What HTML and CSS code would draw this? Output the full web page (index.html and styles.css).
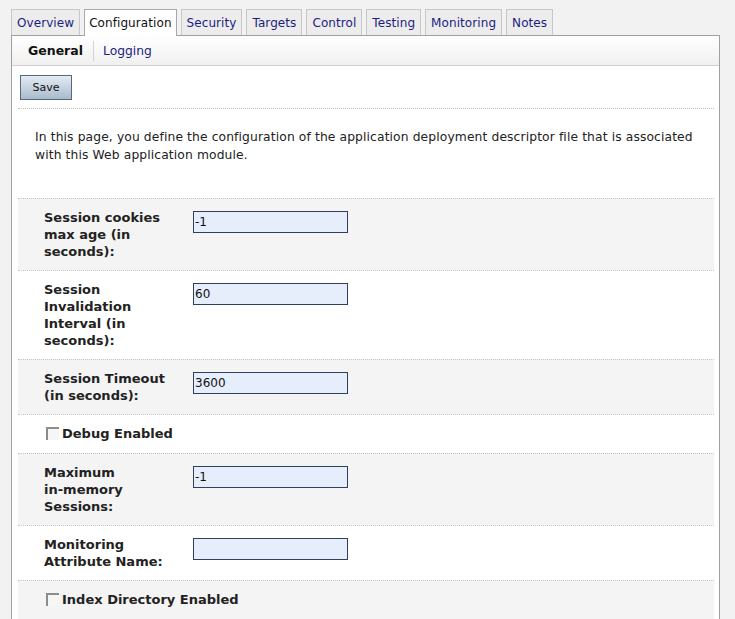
FILE: index.html
```html
<!DOCTYPE html>
<html>
<head>
<meta charset="utf-8">
<link rel="stylesheet" href="styles.css">
</head>
<body>
<div class="tabs">
  <span class="tab">Overview</span>
  <span class="tab active">Configuration</span>
  <span class="tab">Security</span>
  <span class="tab">Targets</span>
  <span class="tab">Control</span>
  <span class="tab">Testing</span>
  <span class="tab">Monitoring</span>
  <span class="tab">Notes</span>
</div>
<div class="panel">
  <div class="subtabs">
    <span class="sub current">General</span>
    <span class="sep"></span>
    <span class="sub link">Logging</span>
  </div>
  <div class="content">
    <div class="actions"><button class="btn">Save</button></div>
    <div class="desc">In this page, you define the configuration of the application deployment descriptor file that is associated with this Web application module.</div>
    <div class="row alt">
      <label class="lbl">Session cookies max age (in seconds):</label>
      <input class="field" type="text" value="-1">
    </div>
    <div class="row">
      <label class="lbl">Session Invalidation Interval (in seconds):</label>
      <input class="field" type="text" value="60">
    </div>
    <div class="row alt">
      <label class="lbl">Session Timeout (in seconds):</label>
      <input class="field" type="text" value="3600">
    </div>
    <div class="row ckrow">
      <span class="check"></span><span class="cklbl">Debug Enabled</span>
    </div>
    <div class="row alt">
      <label class="lbl">Maximum <span class="nowrap">in-memory</span> Sessions:</label>
      <input class="field" type="text" value="-1">
    </div>
    <div class="row">
      <label class="lbl">Monitoring Attribute Name:</label>
      <input class="field" type="text" value="">
    </div>
    <div class="row alt ckrow">
      <span class="check"></span><span class="cklbl">Index Directory Enabled</span>
    </div>
  </div>
</div>
</body>
</html>
```
FILE: styles.css
```css
html, body {
  margin: 0;
  padding: 0;
  background: #f2f2f2;
  font-family: "DejaVu Sans", sans-serif;
}
.tabs {
  display: flex;
  gap: 4px;
  padding: 9px 0 0 11px;
  height: 26px;
}
.tab {
  display: flex;
  align-items: center;
  height: 25px;
  padding: 0 5px;
  border: 1px solid #c8c8c8;
  border-bottom: none;
  background: #ececec;
  color: #1c1c80;
  font-size: 12px;
  letter-spacing: 0.08px;
}
.tab.active {
  background: #fff;
  color: #111;
  border-color: #a8a8a8;
  height: 26px;
  padding: 0 4px;
  position: relative;
  z-index: 1;
}
.panel {
  margin: 0 15px 0 11px;
  border: 1px solid #a0a0a0;
  background: #fff;
  min-height: 600px;
}
.subtabs {
  display: flex;
  align-items: center;
  height: 29px;
  padding-left: 16px;
  background: linear-gradient(#ffffff, #f0f0f0);
  border-bottom: 1px solid #cfcfcf;
  font-size: 12.5px;
}
.sub.current {
  font-weight: bold;
  color: #111;
}
.sep {
  width: 1px;
  height: 20px;
  background: #d4d4d4;
  margin: 0 9px 0 10px;
}
.sub.link {
  color: #1c1c80;
  font-size: 12.3px;
}
.content {
  padding: 0 5px 0 6px;
}
.actions {
  padding: 9px 0 8px 2px;
}
.btn {
  display: block;
  width: 52px;
  height: 25px;
  padding: 0;
  border: 1px solid #56687c;
  background: linear-gradient(#e4ebf3, #a9bbcd);
  color: #111;
  font-family: "DejaVu Sans", sans-serif;
  font-size: 11px;
}
.desc {
  border-top: 1px dotted #bdbdbd;
  padding: 19px 10px 34px 17px;
  font-size: 12.3px;
  letter-spacing: 0.12px;
  line-height: 18px;
  color: #222;
}
.row {
  display: flex;
  align-items: flex-start;
  padding: 10px 0 10px 26px;
  border-top: 1px dotted #c4c4c4;
  font-size: 13px;
  font-weight: bold;
  line-height: 17px;
  color: #222;
}
.row.ckrow {
  padding-bottom: 11px;
}
.row.alt {
  background: #f4f4f4;
}
.lbl {
  width: 130px;
  margin-right: 19px;
}
.nowrap {
  white-space: nowrap;
}
.field {
  box-sizing: border-box;
  width: 155px;
  height: 22px;
  margin: 2px 0 0 0;
  padding: 0 1px;
  border: 1px solid #2f3f5c;
  background: #e6eefc;
  font-family: "DejaVu Sans", sans-serif;
  font-size: 12px;
  color: #111;
}
.check {
  box-sizing: border-box;
  width: 13px;
  height: 13px;
  margin: 2px 3px 0 2px;
  border-top: 2px solid #8c8c8c;
  border-left: 2px solid #8c8c8c;
  background: #f6f6f6;
}
```
